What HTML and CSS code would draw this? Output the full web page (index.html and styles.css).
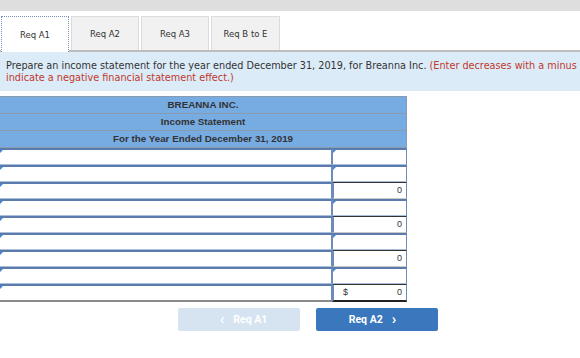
FILE: index.html
```html
<!DOCTYPE html>
<html>
<head>
    <title>Req A1</title>
    <link rel="stylesheet" href="styles.css">
</head>
<body>
    <div class="topbar"></div>
    <div class="tabs">
        <div class="tab active">Req A1</div>
        <div class="tab">Req A2</div>
        <div class="tab">Req A3</div>
        <div class="tab">Req B to E</div>
    </div>
    <div class="instructions">
        <div>Prepare an income statement for the year ended December 31, 2019, for Breanna Inc. <span class="red">(Enter decreases with a minus</span></div>
        <div class="red">indicate a negative financial statement effect.)</div>
    </div>

    <div class="statement">
        <div class="head">BREANNA INC.</div>
        <div class="head">Income Statement</div>
        <div class="head">For the Year Ended December 31, 2019</div>
        <div class="row"><div class="input"></div><div class="input amt"></div></div>
        <div class="row"><div class="input"></div><div class="input amt"></div></div>
        <div class="row"><div class="input"></div><div class="value">0</div></div>
        <div class="row"><div class="input"></div><div class="input amt"></div></div>
        <div class="row"><div class="input"></div><div class="value">0</div></div>
        <div class="row"><div class="input"></div><div class="input amt"></div></div>
        <div class="row"><div class="input"></div><div class="value">0</div></div>
        <div class="row"><div class="input"></div><div class="input amt"></div></div>
        <div class="row last"><div class="input"></div><div class="value final"><span>$</span><span>0</span></div></div>
    </div>

    <div class="nav">
        <button class="nav-btn prev" disabled><span class="chev">&lsaquo;</span>Req A1</button>
        <button class="nav-btn next">Req A2<span class="chev">&rsaquo;</span></button>
    </div>
</body>
</html>
```

FILE: styles.css
```css
body {
    margin: 0;
    padding: 0;
    background-color: #fff;
    font-family: "DejaVu Sans", Verdana, sans-serif;
    color: #333;
    width: 580px;
    overflow: hidden;
}
.topbar {
    height: 11px;
    background-color: #dedede;
}
.tabs {
    display: flex;
    gap: 2px;
    padding: 5px 0 0 1px;
    border-bottom: 2px solid #bdbdbd;
    height: 34px;
}
.tab {
    width: 68px;
    height: 34px;
    border: 1px solid #dcdcdc;
    border-bottom: none;
    background-color: #f1f1f1;
    font-size: 8.5px;
    display: flex;
    align-items: center;
    justify-content: center;
    padding-top: 1px;
    box-sizing: border-box;
    color: #333;
}
.tab:last-child {
    width: 69px;
}
.tab.active {
    background-color: #fff;
    border: 1px dotted #7a8fb5;
    border-bottom: none;
    height: 36px;
    margin-bottom: -2px;
}
.instructions {
    background-color: #dcebf8;
    height: 39px;
    padding: 8px 6px 0 6px;
    box-sizing: border-box;
    font-size: 9.7px;
    line-height: 11.5px;
    white-space: nowrap;
    color: #333;
}
.red {
    color: #c0392b;
}
.statement {
    margin-top: 5px;
    width: 407px;
    font-family: "Liberation Sans", Arial, sans-serif;
}
.head {
    background-color: #77ace3;
    height: 16px;
    border-bottom: 1px solid #8a9bb0;
    border-right: 1px solid #8a9bb0;
    font-size: 9.8px;
    font-weight: bold;
    line-height: 15px;
    text-align: center;
    color: #333;
}
.head:first-child {
    border-top: 1px solid #8a9bb0;
}
.row {
    display: grid;
    grid-template-columns: 332px 75px;
    height: 17px;
}
.input {
    position: relative;
    background-color: #fff;
    border-top: 2px solid #5a7bab;
    border-bottom: 1px solid #a9bedc;
    border-right: 1px solid #6e8cb8;
}
.input.amt {
    border-left: 1px solid #6e8cb8;
}
.input::before {
    content: "";
    position: absolute;
    left: 0;
    top: 0;
    border-top: 3px solid #3f85d9;
    border-right: 3px solid transparent;
}
.value {
    border-left: 2px solid #6e8cb8;
    border-right: 1px solid #6e8cb8;
    border-top: 1px solid #333;
    border-bottom: 1px solid #c8c8c8;
    font-size: 9px;
    line-height: 15px;
    text-align: right;
    padding-right: 4px;
    background-color: #fff;
}
.value.final {
    display: flex;
    justify-content: space-between;
    padding-left: 9px;
    border-bottom: 2px solid #222;
}
.row.last .input {
    border-bottom: 2px solid #8a8a8a;
}
.nav {
    display: flex;
    gap: 16px;
    padding: 7px 0 0 178px;
}
.nav-btn {
    width: 122px;
    height: 23px;
    border: none;
    border-radius: 2px;
    font-family: Roboto, "Liberation Sans", sans-serif;
    font-weight: bold;
    font-size: 10.5px;
    color: #fff;
    padding: 0;
    display: flex;
    align-items: center;
    justify-content: center;
}
.chev {
    font-size: 15px;
    margin: -2px 9px 0 9px;
}
.prev {
    background-color: #d6e3f1;
}
.next {
    background-color: #3a77bd;
    cursor: pointer;
}
```
